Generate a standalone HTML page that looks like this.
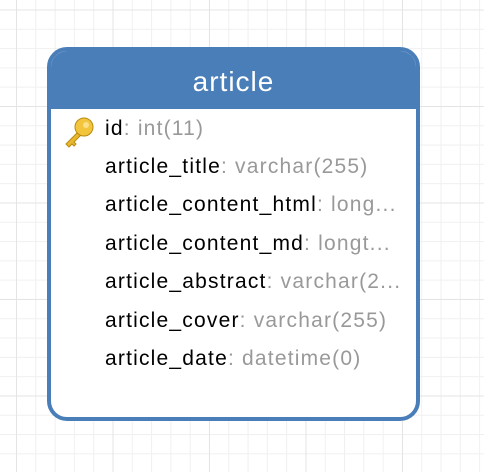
<!DOCTYPE html><html><head><style>
body{margin:0;width:484px;height:472px;overflow:hidden;background-color:#fff;
background-image:linear-gradient(#e4e4e4 1px,transparent 1px),linear-gradient(90deg,#e4e4e4 1px,transparent 1px),linear-gradient(#f0f0f0 1px,transparent 1px),linear-gradient(90deg,#f0f0f0 1px,transparent 1px);
background-size:96.5px 96.5px,96.5px 96.5px,19.3px 19.3px,19.3px 19.3px;
background-position:0 9.5px,16px 0,0 9.5px,16px 0;font-family:"Liberation Sans",sans-serif}
.box{position:absolute;left:47px;top:47px;width:365px;height:366px;border:4px solid #4a7eb8;border-radius:20px;background:#fff;overflow:hidden}
.hd{height:58px;background:#4a7eb8;color:#fff;font-size:28px;letter-spacing:1px;text-align:center;line-height:62px}
.r{position:absolute;left:54px;font-size:21px;letter-spacing:1.2px;color:#000;white-space:nowrap;line-height:24px}
.r span{color:#999}
</style></head><body>
<div class="box"><div class="hd">article</div>
<svg style="position:absolute;left:12px;top:64px" width="34" height="34" viewBox="0 0 34 34"><path d="M14 18 L3 29 L6 32 L9 29 L11 31 L13 29 L11 27 L18 20Z" fill="#e8b830" stroke="#b88a10"/><circle cx="21" cy="12" r="9" fill="#f2c53d" stroke="#b88a10"/><circle cx="23" cy="10" r="3" fill="#fbe08a"/></svg>
<div class="r" style="top:66px">id<span>: int(11)</span></div>
<div class="r" style="top:104px">article_title<span>: varchar(255)</span></div>
<div class="r" style="top:142px">article_content_html<span>: long...</span></div>
<div class="r" style="top:181px">article_content_md<span>: longt...</span></div>
<div class="r" style="top:219px">article_abstract<span>: varchar(2...</span></div>
<div class="r" style="top:258px">article_cover<span>: varchar(255)</span></div>
<div class="r" style="top:296px">article_date<span>: datetime(0)</span></div>
</div></body></html>
